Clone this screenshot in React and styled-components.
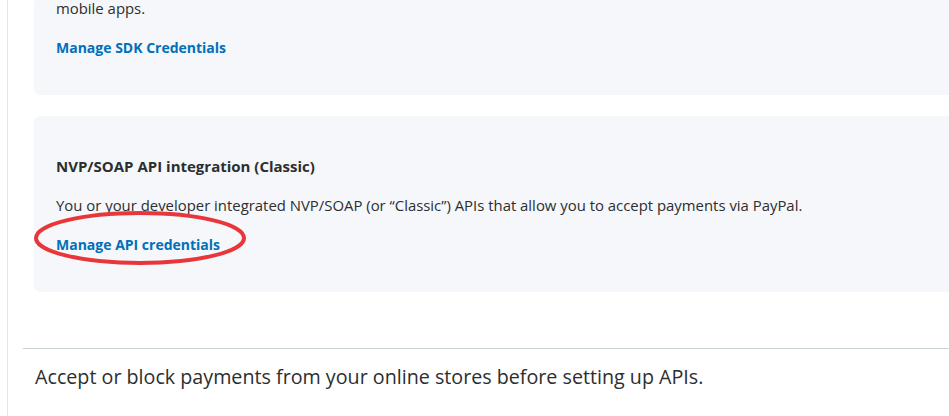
import React from 'react'
import styled, { createGlobalStyle } from 'styled-components'

const GlobalStyle = createGlobalStyle`
  body {
    margin: 0;
    background: #ffffff;
    font-family: 'Open Sans', 'Noto Sans', sans-serif;
    color: #2c2e2f;
    overflow: hidden;
  }
`

const Page = styled.div`
  padding-left: 7px;
  margin-top: -3px;
`

const Main = styled.div`
  border-left: 1px solid #e6e6e6;
  min-height: 430px;
`

const CardList = styled.div`
  display: flex;
  flex-direction: column;
  gap: 21px;
  margin-left: 26px;
`

const Card = styled.div`
  position: relative;
  background: #f5f7fa;
  border-radius: 6px 0 0 6px;
  padding: ${(props) => (props.cut ? '0' : '39px')} 22px 36px;
`

const Heading = styled.h3`
  margin: 0 0 17px;
  font-size: 15px;
  line-height: 22px;
  font-weight: 700;
`

const Body = styled.p`
  margin: 0 0 17px;
  font-size: 14.9px;
  line-height: 22px;
  color: #2c2e2f;
`

const Link = styled.a`
  position: relative;
  display: inline-block;
  font-size: 14px;
  line-height: 22px;
  font-weight: 700;
  color: #0070ba;
  text-decoration: none;
  cursor: pointer;
`

const Circle = styled.svg`
  position: absolute;
  left: -23px;
  top: -25px;
  pointer-events: none;
`

const Divider = styled.hr`
  margin: 56px 0 0 15px;
  border: none;
  border-top: 1px solid #cbd2d6;
`

const Footer = styled.p`
  margin: 14px 0 0 27px;
  font-size: 19.7px;
  line-height: 28px;
  color: #2c2e2f;
`

const App = () => (
  <Page>
    <GlobalStyle />
    <Main>
      <CardList>
        <Card cut>
          <Body>mobile apps.</Body>
          <Link>Manage SDK Credentials</Link>
        </Card>
        <Card>
          <Heading>NVP/SOAP API integration (Classic)</Heading>
          <Body>
            You or your developer integrated NVP/SOAP (or “Classic”) APIs that
            allow you to accept payments via PayPal.
          </Body>
          <Link>
            Manage API credentials
            <Circle width="216" height="60" viewBox="0 0 216 60">
              <ellipse
                cx="107"
                cy="29"
                rx="104"
                ry="25"
                fill="none"
                stroke="#e8363a"
                strokeWidth="4"
              />
            </Circle>
          </Link>
        </Card>
      </CardList>
      <Divider />
      <Footer>
        Accept or block payments from your online stores before setting up
        APIs.
      </Footer>
    </Main>
  </Page>
)

export default App
